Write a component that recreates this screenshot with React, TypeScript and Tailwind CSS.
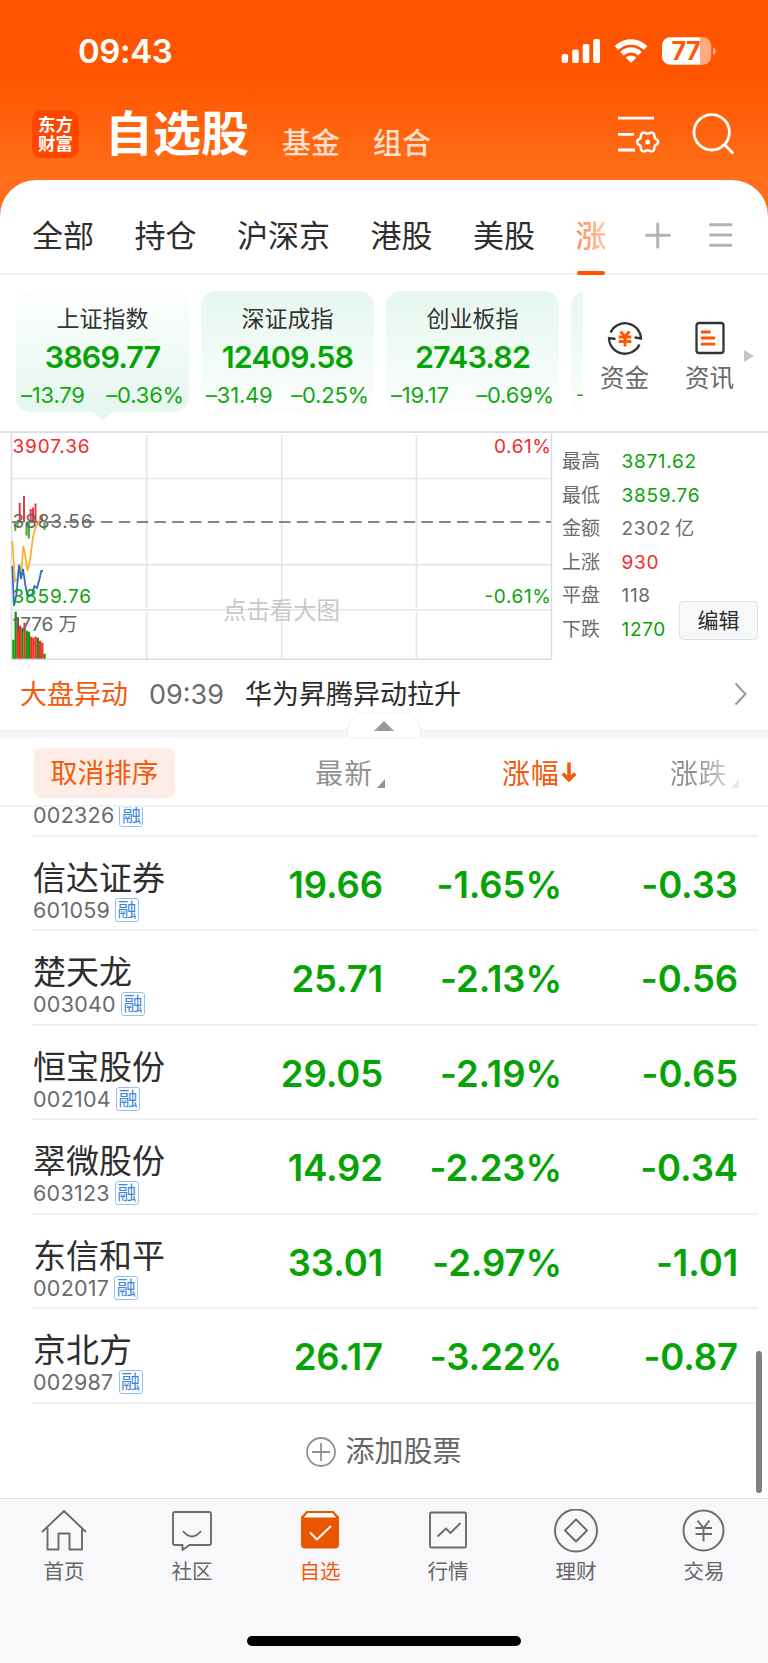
import React from "react";

type Index = { name: string; value: string; diff: string; pct: string; active?: boolean };
type Stock = { name: string; code: string; price: string; pct: string; diff: string };

const tabs = ["全部", "持仓", "沪深京", "港股", "美股"];

const indexes: Index[] = [
  { name: "上证指数", value: "3869.77", diff: "–13.79", pct: "–0.36%", active: true },
  { name: "深证成指", value: "12409.58", diff: "–31.49", pct: "–0.25%" },
  { name: "创业板指", value: "2743.82", diff: "–19.17", pct: "–0.69%" },
];

const stats = [
  { label: "最高", value: "3871.62", color: "text-[#0aa30a]" },
  { label: "最低", value: "3859.76", color: "text-[#0aa30a]" },
  { label: "金额", value: "2302\u2009亿", color: "text-[#6b6b6b]" },
  { label: "上涨", value: "930", color: "text-[#f52a2a]" },
  { label: "平盘", value: "118", color: "text-[#6b6b6b]" },
  { label: "下跌", value: "1270", color: "text-[#0aa30a]" },
];

const stocks: Stock[] = [
  { name: "信达证券", code: "601059", price: "19.66", pct: "-1.65%", diff: "-0.33" },
  { name: "楚天龙", code: "003040", price: "25.71", pct: "-2.13%", diff: "-0.56" },
  { name: "恒宝股份", code: "002104", price: "29.05", pct: "-2.19%", diff: "-0.65" },
  { name: "翠微股份", code: "603123", price: "14.92", pct: "-2.23%", diff: "-0.34" },
  { name: "东信和平", code: "002017", price: "33.01", pct: "-2.97%", diff: "-1.01" },
  { name: "京北方", code: "002987", price: "26.17", pct: "-3.22%", diff: "-0.87" },
];

const volumes = [
  { h: 19, up: false }, { h: 47, up: false }, { h: 41, up: true }, { h: 33, up: true },
  { h: 31, up: false }, { h: 36, up: true }, { h: 28, up: false }, { h: 27, up: false },
  { h: 22, up: true }, { h: 21, up: true }, { h: 22, up: true }, { h: 21, up: false },
  { h: 18, up: true }, { h: 16, up: true }, { h: 5, up: false },
];

// six-lobed outline of the settings gear
const gearPoints = Array.from({ length: 72 }, (_, i) => {
  const a = (i / 72) * Math.PI * 2;
  const r = 9.4 + 1.1 * Math.cos(6 * a);
  return `${(647.6 + r * Math.cos(a)).toFixed(2)},${(142 + r * Math.sin(a)).toFixed(2)}`;
}).join(" ");

const StatusBar = () => (
  <div className="flex h-[100px] items-start pt-[31px] pl-[78px] text-white">
    <span className="h-10 w-[100px] text-[33px] leading-10 font-semibold tracking-[-0.4px]">09:43</span>
    <svg className="mt-[5px] ml-[382px]" width="160" height="32" viewBox="560 36 160 32" fill="#fff">
      <rect x="561.7" y="54" width="6.4" height="9" rx="2" />
      <rect x="572.2" y="49.5" width="6.6" height="13.5" rx="2" />
      <rect x="582.7" y="44" width="6.6" height="19" rx="2" />
      <rect x="593.2" y="39" width="6.8" height="24" rx="2" />
      <path d="M614.8 46.3C623.700 37 638.300 37 647.300 46.300L643.800 50C636.800 43 625.200 43 618.300 50Z" />
      <path d="M620.300 52C626.300 45.800 635.700 45.800 641.800 52L638.200 55.500C634.200 51.600 627.900 51.600 623.900 55.500Z" />
      <path d="M625.700 57.500C628.800 54.700 633.300 54.700 636.400 57.500L631 63Z" />
      <path d="M670 37.300h30v27.400h-30a8 8 0 0 1-8-8v-11.400a8 8 0 0 1 8-8Z" />
      <path d="M700 37.300h3.200a8 8 0 0 1 8 8v11.400a8 8 0 0 1-8 8H700Z" opacity=".5" />
      <path d="M713 47.500c3.800 1.200 3.800 6.300 0 7.500Z" opacity=".5" />
      <text x="671.500" y="60" fontSize="25" fontWeight="700" fill="#fb5a0a" textLength="29" fontFamily="Inter, sans-serif">77</text>
    </svg>
  </div>
);

const TitleBar = () => (
  <div className="flex h-20 items-start pl-8 text-white">
    <div className="mt-2.5 flex h-[48px] w-[47px] flex-col items-center justify-center rounded-[10px] bg-[#ff4600] text-[17.5px] leading-[19.500px] font-bold">
      <span>东方</span>
      <span>财富</span>
    </div>
    <h1 className="mt-[4px] ml-[26px] w-[143px] text-[48px] leading-[60px] font-bold whitespace-nowrap">自选股</h1>
    <span className="mt-[26px] ml-[34px] text-[29px] leading-9 font-medium text-[#ffdfcb]">基金</span>
    <span className="mt-[26px] ml-[33px] text-[29px] leading-9 font-medium text-[#ffdfcb]">组合</span>
    <svg className="mt-3 ml-[185px]" width="120" height="46" viewBox="616 112 120 46" fill="none" stroke="#fff" strokeWidth="2.800">
      <path d="M618 118.200h36M618 134.300h16M618 150h17" />
      <polygon points={gearPoints} strokeLinejoin="round" strokeWidth="2.500" />
      <circle cx="647.600" cy="142" r="2.500" fill="#fff" stroke="none" />
      <circle cx="711.700" cy="132.300" r="17.700" />
      <path d="M724.500 144.500l8.700 9" />
    </svg>
  </div>
);

const TabBar = () => (
  <div className="flex h-[95px] border-b-2 border-[#f1f1f3] pl-8 text-[31px] leading-[111px] text-[#2e2e2e]">
    <div className="flex h-[95px] gap-[40.500px]">
      {tabs.map((tab) => (
        <span key={tab}>{tab}</span>
      ))}
      <span className="relative bg-gradient-to-r from-[#ff8a52] to-[#ffc9ad] bg-clip-text font-medium text-transparent">
        涨
        <i className="absolute bottom-0 left-[1px] h-1 w-7 rounded-full bg-[#ff5500]" />
      </span>
    </div>
    <svg className="mt-10 ml-[37px]" width="90" height="30" viewBox="644 220 90 30" stroke="#b3b3b3" strokeWidth="3" strokeLinecap="round">
      <path d="M646.500 235.300h23M657.700 224v23M710.500 224.700h20.500M710.500 235h20.500M710.500 245.200h20.500" />
    </svg>
  </div>
);

const IndexCard = ({ item }: { item: Index }) => (
  <div
    className={`relative h-[121px] w-[173px] shrink-0 rounded-[15px] whitespace-nowrap ${
      item.active ? "bg-gradient-to-t" : "bg-gradient-to-b"
    } from-[#e5f7ee] to-[#fcfefd]`}
  >
    <div className="pt-[12px] text-center text-[23px] leading-8 text-[#333]">{item.name}</div>
    <div className="text-center text-[30.500px] leading-[44px] font-semibold tracking-[-0.9px] text-[#06a306]">{item.value}</div>
    <div className="flex justify-between px-[5px] pt-px text-[22px] leading-[30px] tracking-[-0.2px] text-[#12a812]">
      <span>{item.diff}</span>
      <span>{item.pct}</span>
    </div>
    {item.active && (
      <svg className="absolute top-[121px] left-[77px]" width="20" height="9">
        <path d="M0 0h20l-8 7q-2 2-4 0Z" fill="#e5f7ee" />
      </svg>
    )}
  </div>
);

const Indexes = () => (
  <div className="flex h-[156px] pt-4 pl-4">
    <div className="flex h-[135px] w-[567px] gap-3 overflow-hidden">
      {indexes.map((item) => (
        <IndexCard key={item.name} item={item} />
      ))}
      <div className="h-[121px] w-[173px] shrink-0 rounded-[15px] bg-gradient-to-b from-[#e5f7ee] to-[#fcfefd] pt-[89px] pl-[5px] text-[18px] leading-[30px] text-[#12a812]">
        -
      </div>
    </div>
    <div className="ml-[17px] w-[49px] pt-[29px] text-center text-[24.500px] leading-9 whitespace-nowrap text-[#6a6a6a]">
      <svg className="mx-auto" width="36" height="36" viewBox="0 0 36 36" fill="none" stroke="#333" strokeWidth="2.300">
        <path d="M3.500 12.500A16 16 0 0 1 34 18.500l-6.500-1.200M32.500 24.500A16 16 0 0 1 2 18l6.500 1" />
        <path stroke="#ff5500" strokeWidth="2.800" d="M13.500 11.500l4.500 5l4.500-5M11.700 17h12.600M11.700 21.500h12.600M18 16.500v10" />
      </svg>
      <div className="mt-[4px]">资金</div>
    </div>
    <div className="ml-[36px] w-[49px] pt-[29px] text-center text-[24.500px] leading-9 whitespace-nowrap text-[#6a6a6a]">
      <svg className="mx-auto" width="36" height="36" viewBox="0 0 36 36" fill="none" stroke="#333" strokeWidth="2.300">
        <rect x="4.500" y="3" width="27" height="30" rx="2.500" />
        <path stroke="#ff5500" strokeWidth="2.800" strokeLinecap="round" d="M10 12h7.500M10 18h12M10 24.200h12" />
      </svg>
      <div className="mt-[4px]">资讯</div>
    </div>
    <svg className="mt-[58px] ml-[10px]" width="10" height="14">
      <path d="M0 1l10 6l-10 6Z" fill="#c4c4c6" />
    </svg>
  </div>
);

const Chart = () => (
  <svg width="553" height="232" viewBox="0 431 553 232" fill="none" fontFamily="Inter, 'Noto Sans CJK SC', sans-serif" fontSize="19">
    <g stroke="#e1e5ec" strokeWidth="1.600">
      <path d="M12 478.500h539M12 564.600h539M12 609.700h539" />
      <path d="M146.700 435v173M146.700 612v47M281.700 435v173M281.700 612v47M416.500 435v173M416.500 612v47" />
    </g>
    <path d="M11.500 433v226.300h540V433" stroke="#d9dbe2" strokeWidth="1.400" />
    <path d="M12 522h539" stroke="#858585" strokeWidth="1.800" strokeDasharray="11.500 6.300" />
    <g stroke="#e53a3e" strokeWidth="2">
      <path d="M19.700 503v19M24 496v26M30.700 509v13M33 507.500v14.500M35.500 503.500v18.500M42 515v7" />
    </g>
    <path stroke="#3fae32" strokeWidth="2" d="M15.300 522v9M17.500 522v5M26.500 522v13.500M28.800 522v16.500M44.500 522v8" />
    <path stroke="#fbb32f" strokeWidth="1.800" d="M12.300 541L15 581L17.500 579L19.500 566L21.500 570L23.300 546L25.500 557L27.500 571L30 560L33 537L35 529L42 516" />
    <path stroke="#2f6fc0" strokeWidth="1.800" d="M12.300 566L14 606L16.500 594L19 565L21 579L23 569L25.500 586L27.500 596L32 595L34.500 586L37 588L39.500 579L41.300 571L43 571" />
    {volumes.map((v, i) => (
      <rect key={i} x={12.3 + i * 2.22} y={658.7 - v.h} width="2.300" height={v.h} fill={v.up ? "#fb2c2c" : "#0c9d0c"} />
    ))}
    <text x="12.500" y="453" fill="#f52a2a" textLength="77">3907.36</text>
    <text x="12.500" y="527.500" fill="#666" textLength="80">3883.56</text>
    <text x="12.500" y="602.500" fill="#0aa30a" textLength="78.500">3859.76</text>
    <text x="12.500" y="631" fill="#666" textLength="65">1776 万</text>
    <text x="494" y="453" fill="#f52a2a" textLength="57">0.61%</text>
    <text x="484.500" y="602.500" fill="#0aa30a" textLength="66.500">-0.61%</text>
    <text x="223" y="618.500" fill="#c8c8ca" fontSize="23.500" textLength="117">点击看大图</text>
  </svg>
);

const MarketPanel = () => (
  <div className="flex h-[232px] border-t-2 border-[#dddfe5]">
    <div className="-mt-0.5 w-[562px]">
      <Chart />
    </div>
    <div className="relative grow pt-[12px] text-[19px] leading-[33.500px] text-[#6b6b6b]">
      {stats.map((s) => (
        <div key={s.label} className="flex">
          <span className="w-[59.500px]">{s.label}</span>
          <span className={`tracking-[0.7px] ${s.color}`}>{s.value}</span>
        </div>
      ))}
      <button className="absolute top-[168px] left-[117px] h-[39px] w-[79px] rounded-[4px] border border-[#dfe1e6] bg-[#f7f8fa] text-[21px] leading-[37px] text-[#2b2b2b]">
        编辑
      </button>
    </div>
  </div>
);

const NewsRow = () => (
  <div className="relative flex h-[75px] border-b-[9px] border-[#f5f6f9] pl-5 text-[27px] leading-[64px] text-[#2b2b2b]">
    <span className="w-[129px] text-[#f25a0c]">大盘异动</span>
    <span className="w-[96px] text-[#6b6b6b]">09:39</span>
    <span>华为昇腾异动拉升</span>
    <svg className="mt-[19px] mr-5 ml-auto" width="14" height="24" fill="none" stroke="#999" strokeWidth="2">
      <path d="M1.500 1.500l10 10.500l-10 10.500" />
    </svg>
    <svg className="absolute top-[49px] left-[346px]" width="76" height="27">
      <path d="M1 26Q2 1 17 1h42q15 0 16 25Z" fill="#fff" stroke="#eeeff2" />
      <path d="M28 19l10-10l10 10Z" fill="#999" />
    </svg>
  </div>
);

const ListHeader = () => (
  <div className="flex h-[69px] border-b-2 border-[#f1f1f3] pl-[34px] text-[28px] leading-[73px] text-[#929292]">
    <button className="mt-[10px] h-[50px] w-[141px] rounded-[8px] bg-[#fdede6] text-[27px] leading-[52px] text-[#f25a0c]">
      取消排序
    </button>
    <span className="ml-[140px] w-[60px] tracking-[1.200px]">最新</span>
    <svg className="mt-[41px] ml-[2px]" width="8" height="9">
      <path d="M8 0v9H0Z" fill="#929292" />
    </svg>
    <span className="ml-[117px] w-[58px] tracking-[0.8px] text-[#f25a0c]">涨幅</span>
    <svg className="mt-[23px] ml-px" width="16" height="24" fill="none" stroke="#f25a0c" strokeWidth="3.600">
      <path d="M8 1.500v17M1.800 12.500l6.200 6.200l6.200-6.200" />
    </svg>
    <span className="ml-[93px] w-[58px] bg-gradient-to-r from-[#929292] from-45% to-[#d5d5d5] bg-clip-text tracking-[0.6px] text-transparent">涨跌</span>
    <svg className="mt-[41px] ml-[3px]" width="8" height="9">
      <path d="M8 0v9H0Z" fill="#e8e8e8" />
    </svg>
  </div>
);

const Code = ({ code }: { code: string }) => (
  <div className="flex h-6 items-center gap-[5px] text-[21.500px] leading-6 tracking-[0.25px] text-[#6b6b6b]">
    {code}
    <span className="h-6 w-6 shrink-0 rounded-[3px] border-[1.500px] border-[#94bff0] text-center text-[19px] leading-[23px] tracking-normal text-[#3b86de]">
      融
    </span>
  </div>
);

const StockRow = ({ stock }: { stock: Stock }) => (
  <div className="mr-[10px] ml-8 flex h-[94.450px] border-b-2 border-[#f1f1f3] text-[36.500px] leading-[96px] font-semibold tracking-[-0.100px] text-[#06a306]">
    <div className="w-[170px] pt-5 pl-px">
      <div className="h-[41px] text-[33px] leading-[42px] font-normal tracking-normal text-[#2e2e2e]">{stock.name}</div>
      <div className="font-normal">
        <Code code={stock.code} />
      </div>
    </div>
    <span className="w-[181px] text-right">{stock.price}</span>
    <span className="w-[179px] text-right">{stock.pct}</span>
    <span className="w-[176px] text-right">{stock.diff}</span>
  </div>
);

const StockList = () => (
  <div className="relative h-[691px] overflow-hidden">
    <div className="mr-[10px] ml-8 flex h-[30px] items-start border-b-2 border-[#f1f1f3] pl-px">
      <div className="-mt-[4px]">
        <Code code="002326" />
      </div>
    </div>
    {stocks.map((stock) => (
      <StockRow key={stock.code} stock={stock} />
    ))}
    <div className="flex h-[96px] items-center justify-center gap-[9px] text-[29px] leading-[96px] text-[#666]">
      <svg width="30" height="30" fill="none" stroke="#919197" strokeWidth="1.800">
        <circle cx="15" cy="15" r="14" />
        <path d="M6 15h18M15 6v18" />
      </svg>
      添加股票
    </div>
    <div className="absolute top-[544px] right-[6px] h-[142px] w-[6px] rounded-full bg-[#808080]" />
  </div>
);

const navItems = [
  { label: "首页", icon: <path d="M1 23L23 2l22 21M6.500 19v21.500h11v-16h11v16h12.500V19" /> },
  { label: "社区", icon: <path d="M6 3h34q2 0 2 2v29q0 2-2 2H20.500l-7 5v-5H6q-2 0-2-2V5q0-2 2-2ZM14 22q9 11 18 0" /> },
  {
    label: "自选",
    active: true,
    icon: (
      <>
        <path fill="#ec5500" stroke="none" d="M9.500 2h27l5.500 6v27.500q0 4-4 4H8q-4 0-4-4V8Z" />
        <path fill="#fff" stroke="none" d="M10.500 4h25l3.500 4.500H7Z" />
        <path stroke="#fff" strokeWidth="2" d="M13 23.500l7 7L34 17" />
      </>
    ),
  },
  { label: "行情", icon: <path d="M6.500 3.500h33q1.500 0 1.500 1.500v32q0 1.500-1.500 1.500h-33q-1.500 0-1.500-1.500v-32q0-1.500 1.500-1.500ZM12.500 27.500l8.500-8l4.500 4.500l10-10" /> },
  {
    label: "理财",
    icon: (
      <>
        <circle cx="23" cy="21.500" r="21" />
        <path d="M23 10.500l11 11l-11 11l-11-11Z" />
      </>
    ),
  },
  {
    label: "交易",
    icon: (
      <>
        <circle cx="22.500" cy="21.500" r="20" />
        <path d="M16.500 11.500l6 7.500l6-7.500M14.500 19h16.500M14.500 25h16.500M22.500 19v13.500" />
      </>
    ),
  },
];

const BottomNav = () => (
  <nav className="h-[166px] border-t border-[#e2e3e9] bg-[#f8f8fb]">
    <div className="grid h-[137px] grid-cols-6">
      {navItems.map((item) => (
        <div key={item.label} className={`flex flex-col items-center pt-[10px] text-[20.500px] leading-7 ${item.active ? "text-[#f25a0c]" : "text-[#666]"}`}>
          <svg width="46" height="44" viewBox="0 0 46 44" fill="none" stroke="#6b6b6b" strokeWidth="1.900" strokeLinejoin="round">
            {item.icon}
          </svg>
          <span className="mt-[5px]">{item.label}</span>
        </div>
      ))}
    </div>
    <div className="mx-auto h-[10px] w-[274px] rounded-full bg-black" />
  </nav>
);

const App: React.FC = () => {
  return (
    <div className="h-[1663px] w-[768px] overflow-hidden bg-white font-[Inter,'Noto_Sans_CJK_SC',sans-serif]">
      <div className="h-[220px] bg-[linear-gradient(180deg,#ff5500_0px,#ff5500_75px,#ff6f1a_180px,#ff6f1a_220px)]">
        <StatusBar />
        <TitleBar />
      </div>
      <div className="relative -mt-10 rounded-t-[36px] bg-white">
        <TabBar />
        <Indexes />
        <MarketPanel />
        <NewsRow />
        <ListHeader />
        <StockList />
        <BottomNav />
      </div>
    </div>
  );
};

export default App;
